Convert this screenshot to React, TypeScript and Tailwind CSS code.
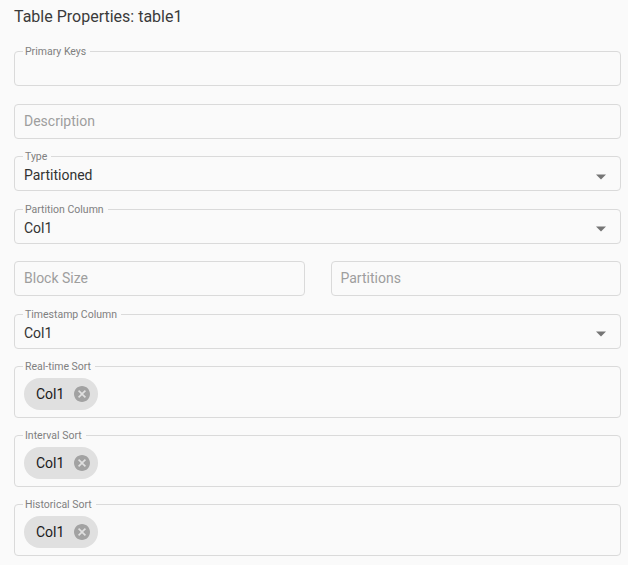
import React from "react";

function Label({ text }: { text: string }) {
  return (
    <span className="absolute -top-[7px] left-[8px] bg-[#fafafa] pl-[2px] pr-[4px] text-[10.5px] leading-[13px] text-[#808080]">
      {text}
    </span>
  );
}

function ArrowDown() {
  return (
    <svg viewBox="0 0 24 24" className="absolute right-[7px] top-1/2 h-6 w-6 -translate-y-[40%] fill-[#757575]">
      <path d="M7 10l5 5 5-5z" />
    </svg>
  );
}

function TextField({ label, placeholder }: { label?: string; placeholder?: string }) {
  return (
    <div className="relative flex h-[35px] items-center rounded-[4px] border border-[#dadada] px-[9px]">
      {label && <Label text={label} />}
      {placeholder && <span className="text-[14px] text-[#9e9e9e]">{placeholder}</span>}
    </div>
  );
}

function SelectField({ label, value }: { label: string; value: string }) {
  return (
    <div className="relative flex h-[35px] items-center rounded-[4px] border border-[#dadada] px-[9px]">
      <Label text={label} />
      <span className="pt-[3px] text-[14px] leading-[20px] text-[#333]">{value}</span>
      <ArrowDown />
    </div>
  );
}

function Chip({ text }: { text: string }) {
  return (
    <div className="flex h-[32px] items-center gap-[10px] rounded-full bg-[#e0e0e0] pl-[12px] pr-[8px]">
      <span className="text-[14px] leading-[20px] text-[#1a1a1a]">{text}</span>
      <svg viewBox="2 2 20 20" className="h-[16px] w-[16px] fill-[#a2a2a2]">
        <path d="M12 2C6.47 2 2 6.47 2 12s4.47 10 10 10 10-4.47 10-10S17.53 2 12 2zm5 13.59L15.59 17 12 13.41 8.41 17 7 15.59 10.59 12 7 8.41 8.41 7 12 10.59 15.59 7 17 8.41 13.41 12 17 15.59z" />
      </svg>
    </div>
  );
}

function ChipField({ label, chips }: { label: string; chips: string[] }) {
  return (
    <div className="relative flex h-[51.5px] items-start gap-2 rounded-[4px] border border-[#dadada] px-[9px] pt-[11px]">
      <Label text={label} />
      {chips.map((c) => (
        <Chip key={c} text={c} />
      ))}
    </div>
  );
}

export default function App() {
  return (
    <div className="h-[565px] w-[628px] overflow-hidden bg-[#fafafa] pl-[14px] pr-[7px] pt-[7px] font-['Roboto',sans-serif]">
      <h1 className="text-[16px] leading-[20px] text-[#3a3a3a]">Table Properties: table1</h1>

      <div className="mt-[24px] flex flex-col gap-[17.5px]">
        <TextField label="Primary Keys" />
        <TextField placeholder="Description" />
        <SelectField label="Type" value="Partitioned" />
        <SelectField label="Partition Column" value="Col1" />
        <div className="grid grid-cols-2 gap-[26px]">
          <TextField placeholder="Block Size" />
          <TextField placeholder="Partitions" />
        </div>
        <SelectField label="Timestamp Column" value="Col1" />
        <ChipField label="Real-time Sort" chips={["Col1"]} />
        <ChipField label="Interval Sort" chips={["Col1"]} />
        <ChipField label="Historical Sort" chips={["Col1"]} />
      </div>
    </div>
  );
}
